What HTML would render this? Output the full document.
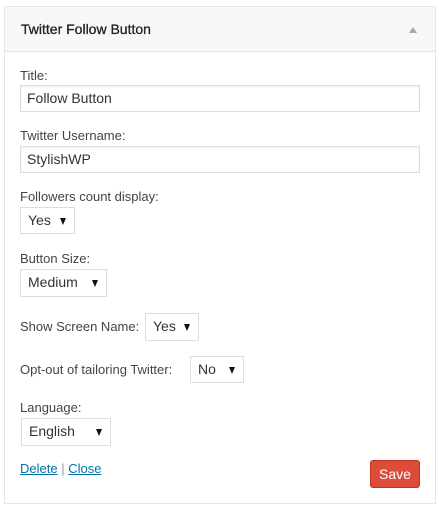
<!DOCTYPE html>
<html><head><style>
*{box-sizing:border-box;margin:0;padding:0}
body{width:441px;height:510px;background:#fff;font-family:"Liberation Sans",sans-serif;color:#444;position:relative;overflow:hidden}
.panel{position:absolute;left:4px;top:6px;width:432px;height:498px;border:1px solid #e5e5e5;background:#fff}
.hd{height:45px;background:#f8f8f8;border-bottom:1px solid #e5e5e5;position:relative}
.hd b{position:absolute;left:16px;top:14px;font-size:14px;font-weight:normal;color:#222;-webkit-text-stroke:0.3px #222}
.tri{position:absolute;left:404px;top:20px;width:0;height:0;border-left:4px solid transparent;border-right:4px solid transparent;border-bottom:6px solid #aaa}
.a{position:absolute;font-size:13px;color:#444;white-space:nowrap}
.in{position:absolute;border:1px solid #ddd;background:#fff;font-size:14px;color:#333;padding-left:6px;line-height:24px;box-shadow:inset 0 1px 2px rgba(0,0,0,.07)}
.sel{position:absolute;border:1px solid #ddd;background:#fff;font-size:14px;color:#333;padding-left:7px;line-height:25px}
.sel:after{content:"";position:absolute;right:8px;top:10px;border-left:3.5px solid transparent;border-right:3.5px solid transparent;border-top:7px solid #111}
a{color:#0073aa;text-decoration:underline}
.save{position:absolute;left:370px;top:460px;width:50px;height:28px;background:#dd4b39;border:1px solid #c23321;border-radius:3px;color:#fff;font-size:14px;text-align:center;line-height:26px}
</style></head><body>
<div class="panel"><div class="hd"><b>Twitter Follow Button</b><div class="tri"></div></div></div>
<div class="a" style="left:20px;top:68px">Title:</div>
<div class="in" style="left:20px;top:85px;width:400px;height:27px">Follow Button</div>
<div class="a" style="left:20px;top:128px">Twitter Username:</div>
<div class="in" style="left:20px;top:146px;width:400px;height:27px">StylishWP</div>
<div class="a" style="left:20px;top:189px">Followers count display:</div>
<div class="sel" style="left:20px;top:207px;width:55px;height:27px">Yes</div>
<div class="a" style="left:20px;top:251px">Button Size:</div>
<div class="sel" style="left:20px;top:269px;width:87px;height:28px">Medium</div>
<div class="a" style="left:20px;top:319px">Show Screen Name:</div>
<div class="sel" style="left:145px;top:313px;width:54px;height:28px">Yes</div>
<div class="a" style="left:20px;top:362px">Opt-out of tailoring Twitter:</div>
<div class="sel" style="left:190px;top:356px;width:54px;height:27px">No</div>
<div class="a" style="left:20px;top:400px">Language:</div>
<div class="sel" style="left:21px;top:418px;width:90px;height:28px">English</div>
<div class="a" style="left:20px;top:461px"><a>Delete</a> <span style="color:#999">|</span> <a>Close</a></div>
<div class="save">Save</div>
</body></html>
